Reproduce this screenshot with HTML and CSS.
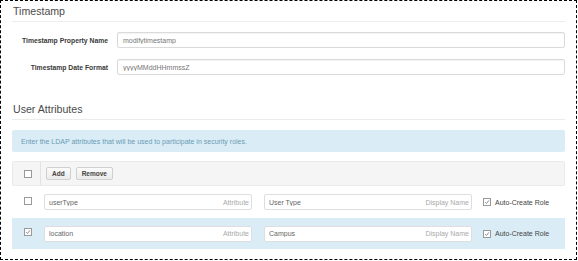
FILE: index.html
```html
<!DOCTYPE html>
<html>
<head>
<meta charset="utf-8">
<link rel="stylesheet" href="styles.css">
</head>
<body>
<div class="frame">
  <section class="section">
    <h2 class="section-title">Timestamp</h2>
    <div class="form">
      <div class="form-row">
        <span class="form-label">Timestamp Property Name</span>
        <input class="text-input" type="text" value="modifytimestamp">
      </div>
      <div class="form-row">
        <span class="form-label">Timestamp Date Format</span>
        <input class="text-input" type="text" value="yyyyMMddHHmmssZ">
      </div>
    </div>
  </section>

  <section class="section section-attrs">
    <h2 class="section-title">User Attributes</h2>
    <div class="info">Enter the LDAP attributes that will be used to participate in security roles.</div>

    <div class="table">
      <div class="table-head">
        <div class="cell-check"><span class="checkbox"></span></div>
        <div class="toolbar">
          <button class="btn" type="button">Add</button>
          <button class="btn" type="button">Remove</button>
        </div>
      </div>

      <div class="table-row">
        <div class="cell-check"><span class="checkbox"></span></div>
        <label class="field"><input type="text" value="userType"><span class="hint">Attribute</span></label>
        <label class="field"><input type="text" value="User Type"><span class="hint">Display Name</span></label>
        <label class="auto-role"><span class="checkbox checked"><svg viewBox="0 0 8 8" width="8" height="8"><path d="M1.5 4.2 L3.3 6 L6.6 1.8" fill="none" stroke="#666" stroke-width="1"/></svg></span>Auto-Create Role</label>
      </div>

      <div class="table-row selected">
        <div class="cell-check"><span class="checkbox checked"><svg viewBox="0 0 8 8" width="8" height="8"><path d="M1.5 4.2 L3.3 6 L6.6 1.8" fill="none" stroke="#666" stroke-width="1"/></svg></span></div>
        <label class="field"><input type="text" value="location"><span class="hint">Attribute</span></label>
        <label class="field"><input type="text" value="Campus"><span class="hint">Display Name</span></label>
        <label class="auto-role"><span class="checkbox checked"><svg viewBox="0 0 8 8" width="8" height="8"><path d="M1.5 4.2 L3.3 6 L6.6 1.8" fill="none" stroke="#666" stroke-width="1"/></svg></span>Auto-Create Role</label>
      </div>
    </div>
  </section>
</div>
</body>
</html>
```

FILE: styles.css
```css
* { box-sizing: border-box; }

html, body {
  margin: 0;
  padding: 0;
  background: #fff;
}

body {
  font-family: "Liberation Sans", Arial, sans-serif;
  color: #333;
}

.frame {
  width: 577px;
  height: 260px;
  border: 1px dashed #000;
  padding: 4px 11px 0 11px;
}

.section-title {
  margin: 0;
  font-size: 10.6px;
  line-height: 12px;
  font-weight: normal;
  color: #4a4a4a;
  padding: 0 0 4px 1px;
  border-bottom: 1px solid #ececec;
}

.form {
  margin-top: 10px;
  display: flex;
  flex-direction: column;
  gap: 11px;
}

.form-row {
  display: flex;
  align-items: center;
  height: 16px;
}

.form-label {
  width: 96px;
  text-align: right;
  font-size: 6.8px;
  font-weight: bold;
  color: #3a3a3a;
  margin-right: 9px;
  white-space: nowrap;
}

.text-input {
  flex: 1;
  height: 16px;
  margin: 0;
  border: 1px solid #dadada;
  border-radius: 2px;
  padding: 0 5px;
  font-family: "Liberation Sans", Arial, sans-serif;
  font-size: 7px;
  color: #777;
  background: #fff;
  box-shadow: inset 0 1px 1px rgba(0,0,0,0.05);
  outline: none;
}

.section-attrs {
  margin-top: 28px;
}

.info {
  margin-top: 10px;
  height: 22px;
  display: flex;
  align-items: center;
  padding-left: 9px;
  background: #daedf7;
  border-radius: 2px;
  font-size: 7px;
  color: #6b9ab3;
}

.table {
  margin-top: 9px;
}

.table-head {
  display: flex;
  height: 25px;
  background: #f5f5f5;
  border: 1px solid #eaeaea;
  border-radius: 2px;
}

.cell-check {
  width: 28px;
  flex: none;
  display: flex;
  align-items: center;
  padding-left: 12px;
}

.table-head .cell-check {
  border-right: 1px solid #e2e2e2;
  padding-left: 11px;
}

.checkbox {
  width: 8px;
  height: 8px;
  border: 1px solid #999;
  background: #fff;
  display: inline-flex;
  align-items: center;
  justify-content: center;
  flex: none;
}

.checkbox svg {
  display: block;
  width: 6px;
  height: 6px;
}

.toolbar {
  display: flex;
  align-items: center;
  gap: 5px;
  padding-left: 5px;
}

.btn {
  height: 13px;
  margin: 0;
  padding: 0 5px;
  font-family: "Liberation Sans", Arial, sans-serif;
  font-size: 6.5px;
  font-weight: bold;
  color: #444;
  background: linear-gradient(#fbfbfb, #ebebeb);
  border: 1px solid #d0d0d0;
  border-radius: 2px;
}

.table-row {
  display: flex;
  align-items: center;
  height: 32px;
}

.table-row .cell-check {
  margin-top: -3px;
}

.table-row.selected {
  height: 31px;
  background: #daedf7;
}

.field {
  width: 208px;
  height: 16px;
  display: flex;
  align-items: center;
  border: 1px solid #dedede;
  border-radius: 2px;
  background: #fff;
  padding: 0 2px 0 4px;
  font-size: 7px;
}

.field + .field {
  margin-left: 12px;
}

.table-row .cell-check + .field {
  margin-left: 4px;
}

.field input {
  flex: 1;
  min-width: 0;
  border: 0;
  margin: 0;
  padding: 0;
  outline: none;
  background: transparent;
  font-family: "Liberation Sans", Arial, sans-serif;
  font-size: 7px;
  color: #666;
}

.hint {
  color: #aaa;
  font-size: 7px;
  white-space: nowrap;
}

.auto-role {
  margin-left: 11px;
  display: flex;
  align-items: center;
  gap: 4px;
  font-size: 7px;
  color: #444;
  white-space: nowrap;
}
```
